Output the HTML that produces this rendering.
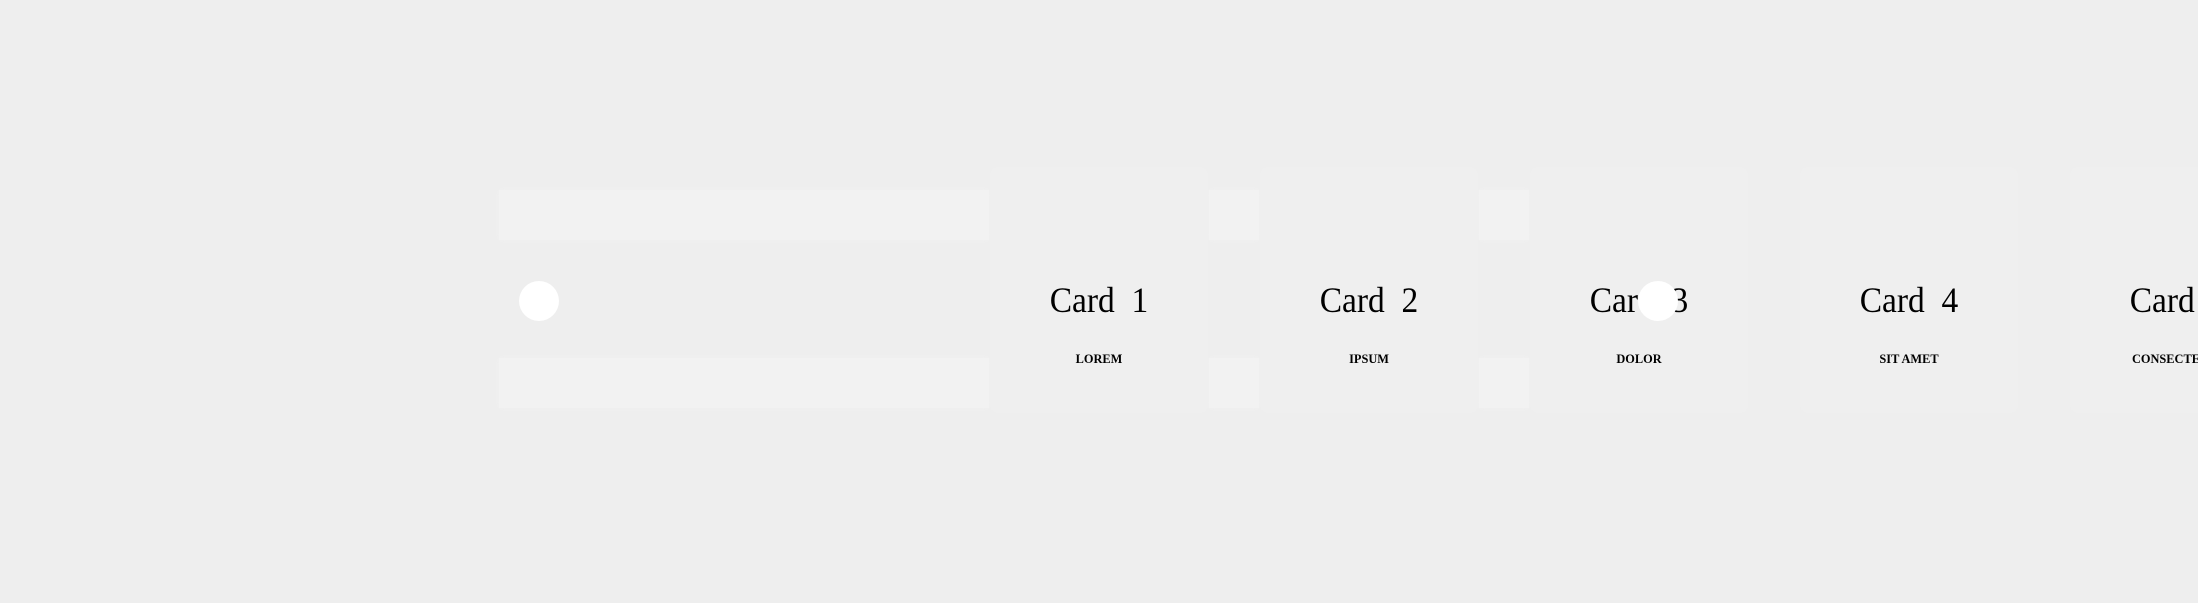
<!DOCTYPE html>
<html><head><style>
html,body{margin:0;padding:0}
body{width:2198px;height:603px;background:#eeeeee;position:relative;overflow:hidden;font-family:"Liberation Serif",serif}
.bar{position:absolute;background:#f2f2f2;box-shadow:0 0 6px #f1f1f1}
.card{position:absolute;top:167px;width:218px;height:246px;background:#efefef;border-radius:8px;text-align:center}
.t{position:absolute;left:0;right:0;top:280px;font-size:36px;line-height:40px;color:#000;white-space:nowrap;transform:scaleX(0.93)}
.s{position:absolute;left:0;right:0;top:351px;font-size:13px;font-weight:bold;color:#000;white-space:nowrap;transform:scaleX(0.95)}
.dot{position:absolute;width:40px;height:40px;border-radius:50%;background:#fff}
</style></head><body>
<div class="bar" style="left:499px;top:190px;width:490px;height:50px"></div>
<div class="bar" style="left:499px;top:358px;width:490px;height:50px"></div>
<div class="bar" style="left:1209px;top:190px;width:50px;height:50px"></div>
<div class="bar" style="left:1209px;top:358px;width:50px;height:50px"></div>
<div class="bar" style="left:1479px;top:190px;width:50px;height:50px"></div>
<div class="bar" style="left:1479px;top:358px;width:50px;height:50px"></div>

<div class="card" style="left:990px"></div>
<div class="card" style="left:1260px"></div>
<div class="card" style="left:1530px"></div>
<div class="card" style="left:1800px"></div>
<div class="card" style="left:2070px"></div>

<div style="position:absolute;left:990px;width:218px;top:0;text-align:center"><div class="t">Card&nbsp; 1</div><div class="s">LOREM</div></div>
<div style="position:absolute;left:1260px;width:218px;top:0;text-align:center"><div class="t">Card&nbsp; 2</div><div class="s">IPSUM</div></div>
<div style="position:absolute;left:1530px;width:218px;top:0;text-align:center"><div class="t">Card&nbsp; 3</div><div class="s">DOLOR</div></div>
<div style="position:absolute;left:1800px;width:218px;top:0;text-align:center"><div class="t">Card&nbsp; 4</div><div class="s">SIT AMET</div></div>
<div style="position:absolute;left:2070px;width:218px;top:0;text-align:center"><div class="t">Card&nbsp; 5</div><div class="s">CONSECTETUR</div></div>

<div class="dot" style="left:519px;top:281px"></div>
<div class="dot" style="left:1638px;top:281px"></div>
</body></html>
